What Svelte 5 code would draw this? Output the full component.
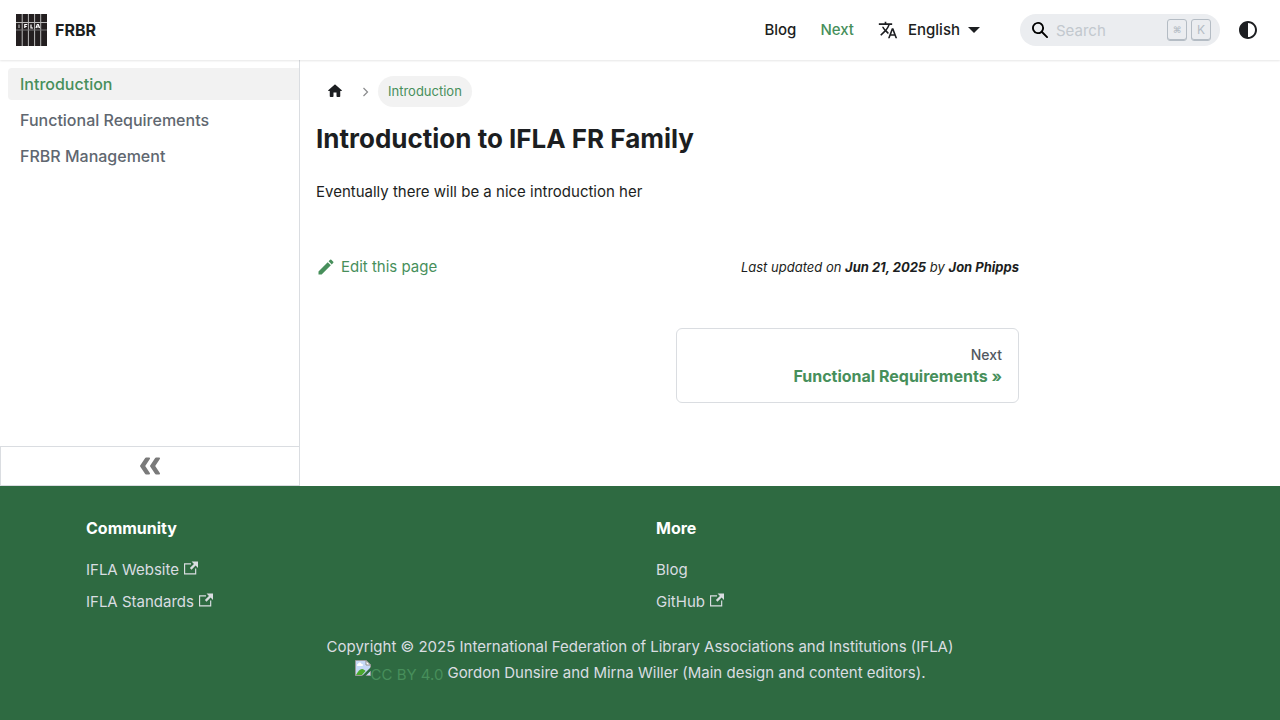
<script>
  const sidebar = ['Introduction', 'Functional Requirements', 'FRBR Management'];
  const columns = [
    {
      title: 'Community',
      links: [
        { label: 'IFLA Website', external: true },
        { label: 'IFLA Standards', external: true }
      ]
    },
    {
      title: 'More',
      links: [
        { label: 'Blog', external: false },
        { label: 'GitHub', external: true }
      ]
    }
  ];
</script>

<div class="page">
  <nav class="navbar" aria-label="Main">
    <a class="brand" href="#home">
      <svg class="logo" viewBox="0 0 31 32" aria-hidden="true">
        <path fill="#231f20" d="M0 0h31v32H0z" />
        <path fill="#bbb" d="M5.700 0h1v32h-1zM11.900 0h1v32h-1zM18.100 0h1v32h-1zM24.200 0h1v32h-1zM0 8h31v1H0z" />
        <path fill="#777" d="M0 15.500h31v1H0z" />
        <path fill="none" stroke="#ccc" stroke-width="1" d="M3 10.500v3.500" />
        <path fill="none" stroke="#fff" stroke-width="1.200" d="M8.800 14v-3.500h2.500M9 12.500h1.800M15 10.500v3.500h2M20 14l1.300-3.500h1l1.300 3.500M20.800 13h2.200" />
      </svg>
      <b>FRBR</b>
    </a>
    <div class="nav-items">
      <a class="nav-link" href="#blog">Blog</a>
      <a class="nav-link active" href="#next">Next</a>
      <button class="nav-link locale" type="button" aria-haspopup="true">
        <svg width="20" height="20" viewBox="0 0 24 24" fill="currentColor" aria-hidden="true"><path d="M12.87 15.07l-2.54-2.51.03-.03c1.74-1.94 2.98-4.17 3.71-6.53H17V4h-7V2H8v2H1v1.99h11.17C11.5 7.92 10.44 9.75 9 11.35 8.07 10.32 7.3 9.19 6.69 8h-2c.73 1.63 1.73 3.17 2.98 4.56l-5.09 5.02L4 19l5-5 3.11 3.11.76-2.04zM18.5 10h-2L12 22h2l1.120-3h4.750L21 22h2l-4.500-12zm-2.620 7l1.620-4.330L19.120 17h-3.240z" /></svg>
        <span>English</span>
        <i class="caret"></i>
      </button>
      <div class="search">
        <svg width="16" height="16" viewBox="0 0 16 16" aria-hidden="true"><path d="M6.029 10.203a4.174 4.174 0 1 1 4.174-4.174 4.156 4.156 0 0 1-4.174 4.174Zm9.692 4.220L10.899 9.600A5.880 5.880 0 0 0 12.058 6.029 6.005 6.005 0 1 0 9.600 10.899l4.823 4.823a.897.897 0 0 0 1.299 0 .897.897 0 0 0-.001-1.299Z" /></svg>
        <input type="search" placeholder="Search" aria-label="Search" />
        <kbd class="command">⌘</kbd><kbd>K</kbd>
      </div>
      <button class="theme" type="button" aria-label="Switch colour mode">
        <svg width="24" height="24" viewBox="0 0 24 24" fill="currentColor" aria-hidden="true"><path d="M12 21c4.971 0 9-4.029 9-9s-4.029-9-9-9-9 4.029-9 9 4.029 9 9 9zm4.950-13.950c1.313 1.313 2.050 3.093 2.050 4.950s-.738 3.637-2.050 4.950c-1.313 1.313-3.093 2.050-4.950 2.050v-14c1.857 0 3.637.737 4.950 2.050z" /></svg>
      </button>
    </div>
  </nav>

  <div class="body">
    <aside>
      <ul class="menu">
        {#each sidebar as item, i}
          <li><a href="#doc-{i}" class:active={i === 0}>{item}</a></li>
        {/each}
      </ul>
      <button class="collapse" type="button" aria-label="Collapse sidebar">
        <svg width="20" height="20" viewBox="0 0 20 20" fill="#7a7a7a" aria-hidden="true"><g transform="rotate(180 10 10)"><path d="M9.992 10.023c0 .2-.062.399-.172.547l-4.996 7.492a.982.982 0 01-.828.454H1c-.55 0-1-.453-1-1 0-.2.059-.403.168-.551l4.629-6.942L.168 3.078A.939.939 0 010 2.528c0-.548.45-.997 1-.997h2.996c.352 0 .649.18.828.45L9.820 9.472c.11.148.172.347.172.55z" /><path d="M19.980 10.023c0 .2-.058.399-.168.547l-4.996 7.492a.987.987 0 01-.828.454h-3c-.547 0-.996-.453-.996-1 0-.2.059-.403.168-.551l4.625-6.942-4.625-6.945a.939.939 0 01-.168-.55 1 1 0 01.996-.997h3c.348 0 .649.18.828.45l4.996 7.492c.11.148.168.347.168.55z" /></g></svg>
      </button>
    </aside>

    <main>
      <div class="doc">
        <nav class="crumbs" aria-label="Breadcrumbs">
          <a href="#home" aria-label="Home page">
            <svg width="18" height="18" viewBox="0 0 24 24" fill="currentColor" aria-hidden="true"><path d="M10 19v-5h4v5c0 .55.45 1 1 1h3c.55 0 1-.45 1-1v-7h1.700c.46 0 .68-.57.33-.87L12.670 3.600c-.38-.34-.96-.34-1.340 0l-8.360 7.530c-.34.3-.13.87.33.87H5v7c0 .55.45 1 1 1h3c.55 0 1-.45 1-1z" /></svg>
          </a>
          <svg class="sep" width="7" height="10" viewBox="0 0 7 10" fill="none" stroke="#8a8b8d" stroke-width="1.200" aria-hidden="true"><path d="M1.500 1L5.500 5L1.500 9" /></svg>
          <span class="current">Introduction</span>
        </nav>
        <h1>Introduction to IFLA FR Family</h1>
        <p>Eventually there will be a nice introduction her</p>
        <div class="meta">
          <a href="#edit">
            <svg width="20" height="20" viewBox="0 0 40 40" fill="currentColor" aria-hidden="true"><path d="m34.500 11.700l-3 3.100-6.300-6.300 3.100-3q0.500-0.500 1.200-0.500t1.100 0.500l3.900 3.900q0.500 0.400 0.500 1.100t-0.500 1.200z m-29.500 17.100l18.400-18.500 6.300 6.300-18.400 18.400h-6.300v-6.200z" /></svg>
            Edit this page
          </a>
          <span class="updated">Last updated on <b>Jun 21, 2025</b> by <b>Jon Phipps</b></span>
        </div>
        <nav class="pager" aria-label="Docs pages">
          <a href="#doc-1"><small>Next</small><b>Functional Requirements »</b></a>
        </nav>
      </div>
    </main>
  </div>

  <footer>
    <div class="container">
      <div class="columns">
        {#each columns as col}
          <section>
            <h2>{col.title}</h2>
            <ul>
              {#each col.links as link}
                <li>
                  <a href="#{link.label}">{link.label}{#if link.external}<svg class="ext" viewBox="0 0 24 24" fill="currentColor" aria-hidden="true"><path d="M21 13v10h-21v-19h12v2h-10v15h17v-8h2zm3-12h-10.988l4.035 4-6.977 7.070 2.828 2.828 6.977-7.070 4.125 4.172v-11z" /></svg>{/if}</a>
                </li>
              {/each}
            </ul>
          </section>
        {/each}
      </div>
      <div class="copyright">
        <div>Copyright © 2025 International Federation of Library Associations and Institutions (IFLA)</div>
        <div class="credit">
          <a href="#license"><svg width="16" height="16" viewBox="0 0 16 16" aria-hidden="true"><path fill="#c6d9f7" stroke="#9a9a9a" d="M.500.500h10.500l4.500 4.500v10.500H.500z" /><path fill="#fff" d="M3 6c-1.500 0-1.500-2 0-2 .5-2 3-2 3.500 0 2-.3 2 2 .5 2z" /><path fill="#4ca82e" d="M1 15c2-4 4-6 6-6 1.500 0 2.500 1 3.500 2L7 15z" /><path fill="#fff" stroke="#8f8f8f" d="M11 .500v4.500h4.500z" /><path fill="#2e6a41" d="M7 16L16 7v3.500L10.500 16z" /></svg><span>CC BY 4.0</span></a>
          <span>Gordon Dunsire and Mirna Willer (Main design and content editors).</span>
        </div>
      </div>
    </div>
  </footer>
</div>

<style>
  :global(body) { margin: 0; }
  .page, .page * { box-sizing: border-box; }
  .page {
    display: flex;
    flex-direction: column;
    min-height: 100vh;
    font: 15px/26px Inter, sans-serif;
    color: #1c1e21;
    background: #fff;
  }
  a { color: inherit; text-decoration: none; }
  button { font: inherit; color: inherit; border: 0; background: none; padding: 0; cursor: pointer; }
  ul { list-style: none; margin: 0; padding: 0; }
  svg { flex: none; }

  .navbar {
    position: relative;
    display: flex;
    justify-content: space-between;
    align-items: center;
    height: 60px;
    padding: 0 20px 0 16px;
    box-shadow: 0 1px 2px 0 rgba(0, 0, 0, 0.1);
  }
  .brand { display: flex; align-items: center; gap: 8px; font-size: 16px; }
  .logo { width: 31px; height: 32px; }
  .nav-items { display: flex; align-items: center; }
  .nav-link { padding: 0 12px; font-weight: 500; }
  .active { color: #478f5b; }
  .locale { display: flex; align-items: center; }
  .locale span { margin: 0 8px 0 10px; }
  .caret { border: 6px solid transparent; border-top-color: currentColor; border-bottom: 0; }
  .search {
    display: flex;
    align-items: center;
    width: 200px;
    height: 32px;
    margin: 0 16px 0 28px;
    padding: 0 9px 0 12px;
    border-radius: 16px;
    background: #ebedf0;
  }
  .search input {
    flex: 1;
    min-width: 0;
    margin: 0;
    padding: 0 0 0 8px;
    border: 0;
    outline: 0;
    background: none;
    font: 15px Inter, sans-serif;
    appearance: none;
  }
  .search input::placeholder { color: #c2c8ce; opacity: 1; }
  kbd {
    width: 20px;
    height: 22px;
    margin-left: 4px;
    border: 1px solid #b4bcc4;
    border-radius: 3px;
    box-shadow: inset 0 -1px 0 #b4bcc4;
    font: 12px/20px Inter, sans-serif;
    text-align: center;
    color: #b4bcc4;
  }
  .command { font: bold 9px/20px "DejaVu Sans", sans-serif; }
  .theme { width: 24px; height: 24px; }
  .theme svg { display: block; }

  .body { display: flex; flex: 1; }
  aside {
    display: flex;
    flex-direction: column;
    width: 300px;
    border-right: 1px solid #dadde1;
  }
  .menu { flex: 1; padding: 8px 0 8px 8px; }
  .menu li + li { margin-top: 4px; }
  .menu a {
    display: block;
    padding: 6px 12px;
    border-radius: 4px 0 0 4px;
    font-size: 16px;
    font-weight: 500;
    line-height: 20px;
    color: #606770;
  }
  .menu a.active { background: #f2f2f2; color: #478f5b; }
  .collapse {
    display: flex;
    align-items: center;
    justify-content: center;
    height: 40px;
    border: 1px solid #dadde1;
    border-right: 0;
  }
  main { flex: 1; min-width: 0; padding: 16px 0 83px; }
  .doc { width: 75%; padding: 0 16px; }
  .crumbs { display: flex; align-items: center; height: 31px; }
  .crumbs a { padding: 0 10px 2px; }
  .crumbs svg { display: block; }
  .crumbs .sep { margin: 0 9px 0 8px; }
  .current {
    padding: 0 10px;
    border-radius: 16px;
    background: #f2f2f2;
    color: #478f5b;
    font-size: 13px;
    line-height: 31px;
  }
  h1 { margin: 14px 0 23px; font-size: 26px; line-height: 35px; }
  p { margin: 0; }
  .meta { display: flex; justify-content: space-between; align-items: center; margin-top: 49px; color: #478f5b; }
  .meta a { display: flex; align-items: center; gap: 5px; }
  .updated { color: #1c1e21; font-size: 13px; font-style: italic; }
  .pager { display: grid; grid-template-columns: 1fr 1fr; gap: 16px; margin-top: 48px; }
  .pager a {
    grid-column: 2;
    display: flex;
    flex-direction: column;
    padding: 16px;
    border: 1px solid #dadde1;
    border-radius: 6px;
    text-align: right;
    font-size: 16px;
    line-height: 20px;
    color: #478f5b;
  }
  .pager small { margin-bottom: 1px; font-size: 14px; font-weight: 500; color: #525860; }

  footer { padding: 32px 0 34px; background: #2e6a41; color: #dadde1; }
  .container { max-width: 1140px; margin: 0 auto; padding: 0 16px; }
  .columns { display: grid; grid-template-columns: 1fr 1fr; gap: 32px; }
  h2 { margin: 0 0 16px; font-size: 16px; line-height: 20px; color: #fff; }
  .columns li { line-height: 32px; }
  .ext { width: 14px; height: 14px; margin-left: 5px; }
  .copyright { margin-top: 16px; text-align: center; }
  .credit { display: flex; justify-content: center; gap: 4px; }
  .credit a { display: flex; color: #478f5b; }
  .credit a span { padding-top: 2px; }
</style>
